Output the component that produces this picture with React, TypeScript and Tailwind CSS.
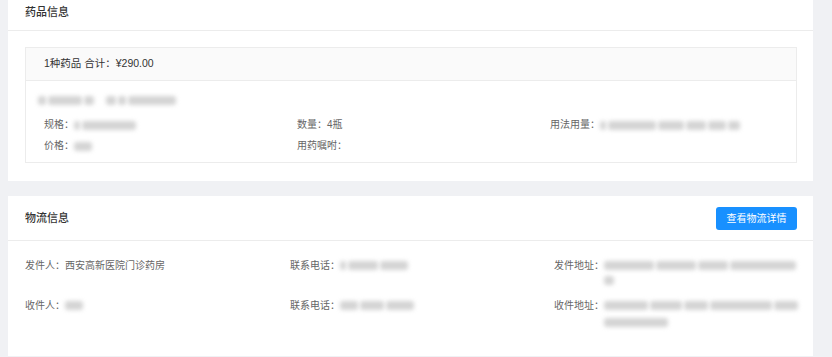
import React from 'react';

// redacted value placeholder: a soft grey smudge
const Blur = ({ parts, className = '' }: { parts: number[]; className?: string }) => (
  <span className={`inline-flex items-center gap-[2px] align-middle ${className}`}>
    {parts.map((w, i) => (
      <span key={i} className="inline-block h-[9px] rounded-[3px] bg-[#d4d4d4] blur-[2px]" style={{ width: w }} />
    ))}
  </span>
);

const Field = ({ label, children }: { label: string; children?: React.ReactNode }) => (
  <div className="flex items-center text-[10px] leading-[16px] text-[#666]">
    <span className="shrink-0">{label}：</span>
    {children}
  </div>
);

const App = () => {
  return (
    <div
      className="w-[832px] h-[357px] overflow-hidden bg-[#f0f1f4] pl-[8px] pr-[19px] pb-[1px] flex flex-col"
      style={{ fontFamily: '"Liberation Sans", "Noto Sans CJK SC", sans-serif' }}
    >
      {/* 药品信息 */}
      <section className="bg-white">
        <div className="h-[31px] flex items-start pt-[5px] pl-[17px] border-b border-[#ececec]">
          <h3 className="text-[11px] leading-[14px] font-medium text-[#333]">药品信息</h3>
        </div>
        <div className="pt-[16px] pb-[18px] pl-[17px] pr-[16px]">
          <div className="border border-[#ececec]">
            <div className="h-[33px] flex items-center px-[18px] bg-[#fafafa] border-b border-[#ececec] text-[10.5px] text-[#333]">
              1种药品 合计：¥290.00
            </div>
            <div className="pt-[10px] pb-[8px] px-[12px]">
              <div className="h-[18px] flex items-center gap-[12px] mb-[8px]">
                <Blur parts={[8, 34, 10]} />
                <Blur parts={[10, 8, 48]} />
              </div>
              <div className="grid grid-cols-[253px_253px_1fr] gap-y-[5px] pl-[6px]">
                <Field label="规格">
                  <Blur parts={[6, 54]} />
                </Field>
                <Field label="数量">4瓶</Field>
                <Field label="用法用量">
                  <Blur parts={[6, 48, 26, 20, 18, 12]} />
                </Field>
                <Field label="价格">
                  <Blur parts={[18]} />
                </Field>
                <Field label="用药嘱咐" />
                <div />
              </div>
            </div>
          </div>
        </div>
      </section>

      {/* 物流信息 */}
      <section className="bg-white mt-[15px] flex-1">
        <div className="h-[45px] flex items-center justify-between pl-[17px] pr-[16px] border-b border-[#ececec]">
          <h3 className="text-[11px] font-medium text-[#333]">物流信息</h3>
          <button className="h-[23px] w-[81px] rounded-[3px] bg-[#1890ff] text-white text-[10px]">
            查看物流详情
          </button>
        </div>
        <div className="pt-[17px] pl-[17px] pr-[18px] grid grid-cols-[265px_264px_1fr] gap-y-[13px] text-[10px] leading-[15px] text-[#666]">
          <div className="flex items-start">
            <span>发件人：</span>
            <span>西安高新医院门诊药房</span>
          </div>
          <div className="flex items-start">
            <span>联系电话：</span>
            <Blur parts={[6, 30, 28]} className="mt-[3px]" />
          </div>
          <div className="flex items-start">
            <span className="shrink-0">发件地址：</span>
            <span className="flex flex-col gap-[6px] pt-[3px]">
              <Blur parts={[50, 40, 30, 66]} />
              <Blur parts={[10]} />
            </span>
          </div>
          <div className="flex items-start">
            <span>收件人：</span>
            <Blur parts={[18]} className="mt-[3px]" />
          </div>
          <div className="flex items-start">
            <span>联系电话：</span>
            <Blur parts={[18, 24, 28]} className="mt-[3px]" />
          </div>
          <div className="flex items-start">
            <span className="shrink-0">收件地址：</span>
            <span className="flex flex-col gap-[8px] pt-[3px]">
              <Blur parts={[44, 32, 24, 62, 24]} />
              <Blur parts={[64]} />
            </span>
          </div>
        </div>
      </section>
    </div>
  );
};

export default App;
